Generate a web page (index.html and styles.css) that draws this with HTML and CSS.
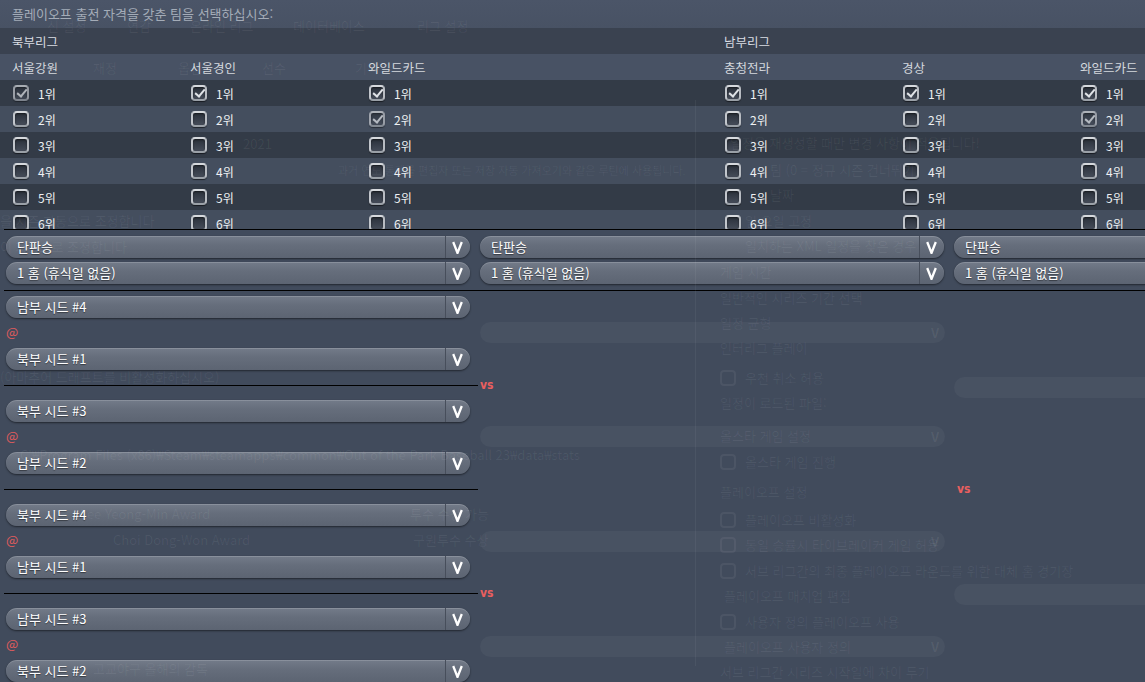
FILE: index.html
```html
<!DOCTYPE html>
<html lang="ko">
<head>
<meta charset="utf-8">
<title>플레이오프 설정</title>
<link rel="stylesheet" href="styles.css">
</head>
<body>
<main class="dialog">
  <p class="title">플레이오프 출전 자격을 갖춘 팀을 선택하십시오:</p>
  <section class="qual">
    <div class="grid-row league">
      <span>북부리그</span><span></span><span></span><span></span><span>남부리그</span><span></span><span></span>
    </div>
    <div class="grid-row division">
      <span>서울강원</span><span>서울경인</span><span>와일드카드</span><span></span><span>충청전라</span><span>경상</span><span>와일드카드</span>
    </div>
    <div class="grid-row rank dark">
      <label class="opt"><i class="cb on dim"></i>1위</label><label class="opt"><i class="cb on"></i>1위</label><label class="opt"><i class="cb on"></i>1위</label><span></span><label class="opt"><i class="cb on"></i>1위</label><label class="opt"><i class="cb on"></i>1위</label><label class="opt"><i class="cb on"></i>1위</label>
    </div>
    <div class="grid-row rank light">
      <label class="opt"><i class="cb"></i>2위</label><label class="opt"><i class="cb"></i>2위</label><label class="opt"><i class="cb on dim"></i>2위</label><span></span><label class="opt"><i class="cb"></i>2위</label><label class="opt"><i class="cb"></i>2위</label><label class="opt"><i class="cb on dim"></i>2위</label>
    </div>
    <div class="grid-row rank dark">
      <label class="opt"><i class="cb"></i>3위</label><label class="opt"><i class="cb"></i>3위</label><label class="opt"><i class="cb"></i>3위</label><span></span><label class="opt"><i class="cb"></i>3위</label><label class="opt"><i class="cb"></i>3위</label><label class="opt"><i class="cb"></i>3위</label>
    </div>
    <div class="grid-row rank light">
      <label class="opt"><i class="cb"></i>4위</label><label class="opt"><i class="cb"></i>4위</label><label class="opt"><i class="cb"></i>4위</label><span></span><label class="opt"><i class="cb"></i>4위</label><label class="opt"><i class="cb"></i>4위</label><label class="opt"><i class="cb"></i>4위</label>
    </div>
    <div class="grid-row rank dark">
      <label class="opt"><i class="cb"></i>5위</label><label class="opt"><i class="cb"></i>5위</label><label class="opt"><i class="cb"></i>5위</label><span></span><label class="opt"><i class="cb"></i>5위</label><label class="opt"><i class="cb"></i>5위</label><label class="opt"><i class="cb"></i>5위</label>
    </div>
    <div class="grid-row rank light">
      <label class="opt"><i class="cb"></i>6위</label><label class="opt"><i class="cb"></i>6위</label><label class="opt"><i class="cb"></i>6위</label><span></span><label class="opt"><i class="cb"></i>6위</label><label class="opt"><i class="cb"></i>6위</label><label class="opt"><i class="cb"></i>6위</label>
    </div>
  </section>

  <hr class="rule">

  <section class="series">
    <div class="dd"><span class="dd-label">단판승</span><span class="dd-btn"><svg class="chev" viewBox="0 0 11 13" width="11" height="13"><path d="M1.2 1 L5.5 12 L9.8 1"/></svg></span></div>
    <div class="dd"><span class="dd-label">단판승</span><span class="dd-btn"><svg class="chev" viewBox="0 0 11 13" width="11" height="13"><path d="M1.2 1 L5.5 12 L9.8 1"/></svg></span></div>
    <div class="dd"><span class="dd-label">단판승</span><span class="dd-btn"><svg class="chev" viewBox="0 0 11 13" width="11" height="13"><path d="M1.2 1 L5.5 12 L9.8 1"/></svg></span></div>
    <div class="dd"><span class="dd-label">1 홈 (휴식일 없음)</span><span class="dd-btn"><svg class="chev" viewBox="0 0 11 13" width="11" height="13"><path d="M1.2 1 L5.5 12 L9.8 1"/></svg></span></div>
    <div class="dd"><span class="dd-label">1 홈 (휴식일 없음)</span><span class="dd-btn"><svg class="chev" viewBox="0 0 11 13" width="11" height="13"><path d="M1.2 1 L5.5 12 L9.8 1"/></svg></span></div>
    <div class="dd"><span class="dd-label">1 홈 (휴식일 없음)</span><span class="dd-btn"><svg class="chev" viewBox="0 0 11 13" width="11" height="13"><path d="M1.2 1 L5.5 12 L9.8 1"/></svg></span></div>
  </section>

  <hr class="rule">

  <section class="bracket">
    <div class="match">
      <div class="dd"><span class="dd-label">남부 시드 #4</span><span class="dd-btn"><svg class="chev" viewBox="0 0 11 13" width="11" height="13"><path d="M1.2 1 L5.5 12 L9.8 1"/></svg></span></div>
      <div class="at">@</div>
      <div class="dd"><span class="dd-label">북부 시드 #1</span><span class="dd-btn"><svg class="chev" viewBox="0 0 11 13" width="11" height="13"><path d="M1.2 1 L5.5 12 L9.8 1"/></svg></span></div>
    </div>
    <div class="sep"><span class="seg"></span><span class="vs-slot">vs</span></div>
    <div class="match">
      <div class="dd"><span class="dd-label">북부 시드 #3</span><span class="dd-btn"><svg class="chev" viewBox="0 0 11 13" width="11" height="13"><path d="M1.2 1 L5.5 12 L9.8 1"/></svg></span></div>
      <div class="at">@</div>
      <div class="dd"><span class="dd-label">남부 시드 #2</span><span class="dd-btn"><svg class="chev" viewBox="0 0 11 13" width="11" height="13"><path d="M1.2 1 L5.5 12 L9.8 1"/></svg></span></div>
    </div>
    <div class="sep"><span class="seg"></span><span class="vs-slot"></span><span class="vs-slot">vs</span></div>
    <div class="match">
      <div class="dd"><span class="dd-label">북부 시드 #4</span><span class="dd-btn"><svg class="chev" viewBox="0 0 11 13" width="11" height="13"><path d="M1.2 1 L5.5 12 L9.8 1"/></svg></span></div>
      <div class="at">@</div>
      <div class="dd"><span class="dd-label">남부 시드 #1</span><span class="dd-btn"><svg class="chev" viewBox="0 0 11 13" width="11" height="13"><path d="M1.2 1 L5.5 12 L9.8 1"/></svg></span></div>
    </div>
    <div class="sep"><span class="seg"></span><span class="vs-slot">vs</span></div>
    <div class="match">
      <div class="dd"><span class="dd-label">남부 시드 #3</span><span class="dd-btn"><svg class="chev" viewBox="0 0 11 13" width="11" height="13"><path d="M1.2 1 L5.5 12 L9.8 1"/></svg></span></div>
      <div class="at">@</div>
      <div class="dd"><span class="dd-label">북부 시드 #2</span><span class="dd-btn"><svg class="chev" viewBox="0 0 11 13" width="11" height="13"><path d="M1.2 1 L5.5 12 L9.8 1"/></svg></span></div>
    </div>
  </section>
</main>

<div class="ghost" aria-hidden="true">
  <span class="g" style="left:47px;top:18px">신 설정</span>
  <span class="g" style="left:127px;top:18px">연감</span>
  <span class="g" style="left:190px;top:18px">온라인 리그</span>
  <span class="g" style="left:293px;top:18px">데이터베이스</span>
  <span class="g" style="left:417px;top:18px">리그 설정</span>
  <span class="g" style="left:93px;top:60px">재정</span>
  <span class="g" style="left:178px;top:60px">옵션</span>
  <span class="g" style="left:262px;top:60px">선수</span>
  <span class="g" style="left:355px;top:60px">기록</span>
  <span class="g" style="left:243px;top:136px">2021</span>
  <span class="g small" style="left:338px;top:162px">과거 연도 통계를 편집자 또는 저장 자동 가져오기와 같은 루틴에 사용됩니다.</span>
  <span class="g" style="left:0;top:213px">을 시즌 자동으로 조정합니다</span>
  <span class="g" style="left:0;top:239px">이 자동으로 조정합니다</span>
  <span class="g" style="left:0;top:369px">(아마추어 드래프트를 비활성화하십시오)</span>
  <span class="g" style="left:20px;top:447px">C:₩Program Files (x86)₩Steam₩steamapps₩common₩Out of the Park Baseball 23₩data₩stats</span>
  <span class="g" style="left:80px;top:506px">Lee Yeong-Min Award</span>
  <span class="g" style="left:410px;top:506px">투수 수상 가능</span>
  <span class="g" style="left:113px;top:532px">Choi Dong-Won Award</span>
  <span class="g" style="left:413px;top:532px">구원투수 수상</span>
  <span class="g" style="left:93px;top:661px">고교야구 올해의 감독</span>

  <span class="gline"></span>

  <span class="g" style="left:730px;top:135px">일정을 재생성할 때만 변경 사항이 적용됩니다!</span>
  <span class="g" style="left:770px;top:162px">팀 (0 = 정규 시즌 건너뛰기)</span>
  <span class="g" style="left:770px;top:187px">날짜</span>
  <span class="g" style="left:745px;top:213px">일 요일 고정</span>
  <span class="g" style="left:745px;top:238px">일치하는 XML 일정을 찾은 경우</span>
  <span class="g" style="left:720px;top:264px">게임 시간</span>
  <span class="g" style="left:720px;top:290px">일반적인 시리즈 기간 선택</span>
  <span class="g" style="left:720px;top:315px">일정 균형</span>
  <span class="g" style="left:720px;top:340px">인터리그 플레이</span>
  <span class="g" style="left:745px;top:370px">우천 취소 허용</span>
  <span class="g" style="left:720px;top:395px">일정이 로드된 파일:</span>
  <span class="g" style="left:720px;top:428px">올스타 게임 설정</span>
  <span class="g" style="left:745px;top:454px">올스타 게임 진행</span>
  <span class="g" style="left:720px;top:484px">플레이오프 설정</span>
  <span class="g" style="left:745px;top:512px">플레이오프 비활성화</span>
  <span class="g" style="left:745px;top:537px">동일 승률시 타이브레이커 게임 허용</span>
  <span class="g" style="left:745px;top:563px">서브 리그간의 최종 플레이오프 라운드를 위한 대체 홈 경기장</span>
  <span class="g" style="left:724px;top:588px">플레이오프 매치업 편집</span>
  <span class="g" style="left:745px;top:614px">사용자 정의 플레이오프 사용</span>
  <span class="g" style="left:724px;top:639px">플레이오프 사용자 정의</span>
  <span class="g" style="left:720px;top:664px">서브 리그간 시리즈 시작일에 차이 두기</span>

  <span class="gbox" style="left:720px;top:370px"></span>
  <span class="gbox" style="left:720px;top:454px"></span>
  <span class="gbox" style="left:720px;top:512px"></span>
  <span class="gbox" style="left:720px;top:537px"></span>
  <span class="gbox" style="left:720px;top:563px"></span>
  <span class="gbox" style="left:720px;top:614px"></span>

  <span class="gpill" style="left:480px;top:322px;width:465px"></span>
  <span class="gpill" style="left:480px;top:426px;width:465px"></span>
  <span class="gpill" style="left:480px;top:531px;width:465px"></span>
  <span class="gpill" style="left:480px;top:636px;width:465px"></span>
  <span class="gpill" style="left:954px;top:377px;width:200px"></span>
  <span class="gpill" style="left:954px;top:584px;width:200px"></span>
  <span class="gv" style="left:925px;top:322px">V</span>
  <span class="gv" style="left:925px;top:426px">V</span>
  <span class="gv" style="left:925px;top:531px">V</span>
  <span class="gv" style="left:925px;top:636px">V</span>
</div>
</body>
</html>
```
FILE: styles.css
```css
* { box-sizing: border-box; }
html, body { margin: 0; padding: 0; }
body {
  width: 1145px;
  height: 682px;
  overflow: hidden;
  position: relative;
  background: #414b5c;
  font-family: "Noto Sans CJK KR", "Noto Sans", sans-serif;
  font-size: 12px;
  color: #e6e9ed;
}

.dialog { width: 1145px; }

.title {
  margin: 0;
  height: 28px;
  line-height: 28px;
  padding-left: 12px;
  font-size: 13px;
  color: #a4acb8;
  background: linear-gradient(#4b5568, #485264);
}

.qual { height: 201px; overflow: hidden; }

.grid-row {
  display: grid;
  grid-template-columns: repeat(7, 178px);
  height: 26px;
  padding-left: 12px;
  align-items: center;
  white-space: nowrap;
}
.league { background: #3a4250; color: #d9dde3; font-size: 12.5px; }
.division { background: #485264; color: #d4d8de; font-size: 12.5px; }
.rank.dark { background: #333b47; }
.rank.light { background: #444e5e; }

.opt {
  display: flex;
  align-items: center;
  gap: 9px;
  padding-left: 1px;
  color: #eef0f3;
}

.cb {
  position: relative;
  display: block;
  width: 16px;
  height: 16px;
  border: 2px solid;
  border-color: #d6d9dd #b8bcc2 #9aa0a7 #c2c6cc;
  border-radius: 4px;
  background: linear-gradient(#2a303a, #454c59);
  box-shadow: 0 1px 1px rgba(0, 0, 0, 0.55), inset 0 1px 2px rgba(0, 0, 0, 0.5);
}
.cb.on::after {
  content: "";
  position: absolute;
  left: 3.5px;
  top: -0.5px;
  width: 4px;
  height: 8px;
  border: solid #e0e3e7;
  border-width: 0 2.5px 2.5px 0;
  transform: rotate(40deg);
}
.cb.dim { opacity: 0.72; }

.rule {
  margin: 0 0 0 4px;
  border: 0;
  height: 1px;
  background: #000;
}

.series {
  display: grid;
  grid-template-columns: repeat(3, 464px);
  column-gap: 10px;
  row-gap: 4px;
  padding: 6px 0 6px 6px;
}

.dd {
  display: flex;
  width: 464px;
  height: 22px;
  border-radius: 11px;
  background: linear-gradient(#737b89, #666e7c 40%, #5c6472);
  box-shadow: 0 1px 2px rgba(0, 0, 0, 0.5), inset 0 1px 0 rgba(255, 255, 255, 0.16);
}
.dd-label {
  flex: 1;
  padding-left: 11px;
  line-height: 22px;
  font-size: 13px;
  color: #ffffff;
  white-space: nowrap;
  overflow: hidden;
  text-shadow: 0 1px 1px rgba(0, 0, 0, 0.45);
}
.dd-btn {
  width: 25px;
  display: flex;
  align-items: center;
  justify-content: center;
  padding-right: 2px;
  border-left: 1px solid #474e5b;
}
.chev path {
  fill: none;
  stroke: #ffffff;
  stroke-width: 2.3;
  stroke-linejoin: miter;
}

.bracket { padding: 5px 0 0 6px; }
.match { display: flex; flex-direction: column; }
.at {
  height: 30px;
  line-height: 28px;
  font-size: 13px;
  color: #e25c5c;
}
.sep {
  display: flex;
  align-items: center;
  height: 1px;
  margin: 15px 0 14px -2px;
}
.seg { width: 474px; height: 1px; background: #000; flex: none; }
.vs-slot {
  width: 477px;
  flex: none;
  padding-left: 2px;
  font-family: "DejaVu Sans Condensed", "DejaVu Sans", sans-serif;
  font-size: 12px;
  font-weight: bold;
  color: #e95f5f;
  line-height: 13px;
}

/* faint background window showing through the overlay */
.ghost {
  position: absolute;
  inset: 0;
  pointer-events: none;
  z-index: 2;
}
.g {
  position: absolute;
  font-size: 13px;
  line-height: 16px;
  white-space: nowrap;
  color: rgba(255, 255, 255, 0.065);
}
.g.small { font-size: 11px; }
.gline {
  position: absolute;
  left: 695px;
  top: 100px;
  width: 1px;
  height: 566px;
  background: rgba(255, 255, 255, 0.05);
}
.gbox {
  position: absolute;
  width: 16px;
  height: 16px;
  border: 2px solid rgba(255, 255, 255, 0.06);
  border-radius: 4px;
}
.gpill {
  position: absolute;
  height: 21px;
  border-radius: 11px;
  background: rgba(255, 255, 255, 0.04);
}
.gv {
  position: absolute;
  width: 20px;
  height: 21px;
  line-height: 21px;
  text-align: center;
  font-size: 13px;
  font-weight: bold;
  color: rgba(255, 255, 255, 0.07);
}
```
